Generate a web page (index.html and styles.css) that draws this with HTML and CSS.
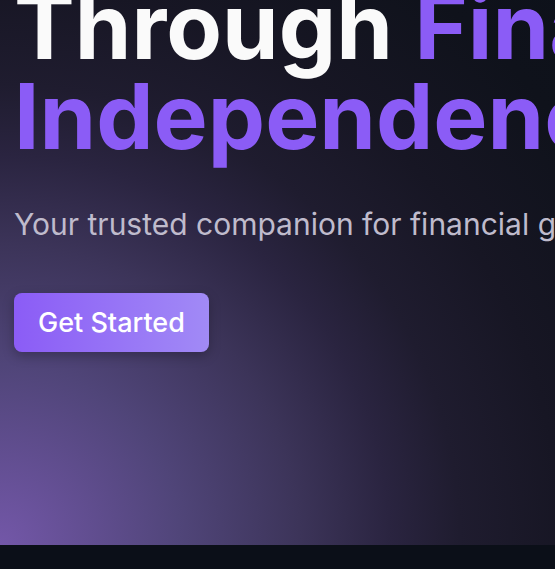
FILE: index.html
```html
<!DOCTYPE html>
<html lang="en">
<head>
<meta charset="utf-8">
<title>Hero</title>
<link rel="stylesheet" href="styles.css">
</head>
<body>
<section class="hero">
  <div class="hero-content">
    <h1 class="hero-title">Through <span class="accent">Financial Independence</span></h1>
    <p class="hero-sub">Your trusted companion for financial growth and freedom</p>
    <a class="btn-primary" href="#">Get Started</a>
  </div>
</section>
<footer class="below"></footer>
</body>
</html>
```
FILE: styles.css
```css
html, body {
  margin: 0;
  padding: 0;
  background: #0b0f18;
  overflow: hidden;
}
body {
  font-family: Inter, "Noto Sans", sans-serif;
  width: 555px;
  height: 569px;
}
.hero {
  height: 545px;
  background: radial-gradient(circle at 0% 100%,
    #7357a8 0px,
    #504579 180px,
    #3c3459 300px,
    #2a2440 390px,
    #1f1c2f 460px,
    #171624 560px,
    #0f121b 700px,
    #0d111a 800px);
  overflow: hidden;
}
.hero-content {
  padding-left: 14px;
  margin-top: -19px;
  width: 1000px;
}
.hero-title {
  margin: 0;
  font-size: 91px;
  line-height: 90px;
  font-weight: 700;
  color: #fafafa;
}
.accent {
  color: #8b5cf6;
}
.hero-sub {
  margin: 43px 0 0;
  font-size: 30px;
  line-height: 40px;
  color: #bfbbcc;
  white-space: nowrap;
}
.btn-primary {
  display: inline-block;
  margin-top: 49px;
  padding: 0 24px;
  height: 59px;
  line-height: 59px;
  font-size: 27px;
  font-weight: 500;
  color: #ffffff;
  text-decoration: none;
  border-radius: 8px;
  background: linear-gradient(to right, #8b5cf6, #a18af6);
  box-shadow: 0 4px 12px rgba(0,0,0,0.25);
}
.below {
  height: 24px;
  background: #0b0f18;
}
```
